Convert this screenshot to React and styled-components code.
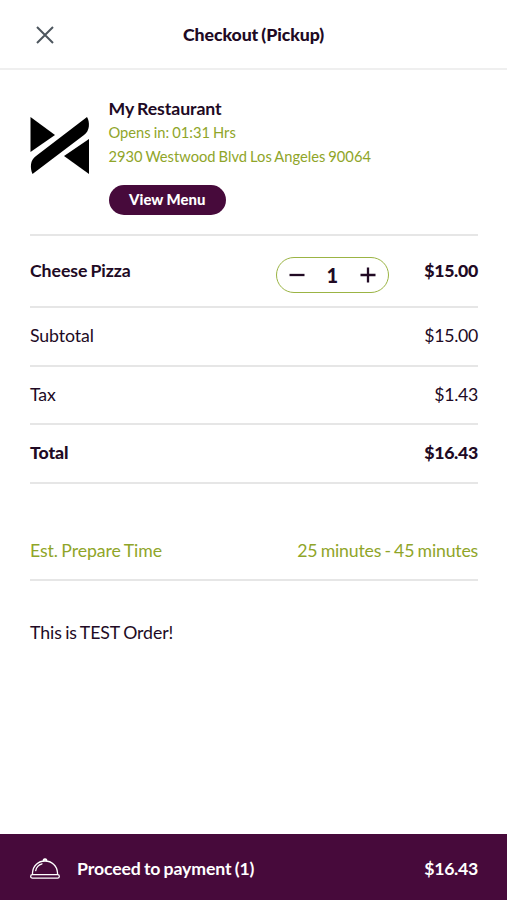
import React, { useState } from "react";
import styled, { createGlobalStyle } from "styled-components";

const GlobalStyle = createGlobalStyle`
  * {
    box-sizing: border-box;
  }

  body {
    margin: 0;
    background-color: #ffffff;
  }
`;

// Styled Components
const Container = styled.div`
  height: 900px;
  display: flex;
  flex-direction: column;
  background-color: #ffffff;
  color: #210a24;
  font-family: "Lato", sans-serif;
  font-size: 17.7px;
  line-height: 22px;
  letter-spacing: -0.08px;
  word-spacing: -1px;
`;

const Header = styled.header`
  height: 70px;
  padding: 0 30px;
  display: grid;
  grid-template-columns: 30px 1fr 30px;
  align-items: center;
  border-bottom: 2px solid #efefef;
`;

const IconButton = styled.button`
  width: 30px;
  height: 30px;
  padding: 0;
  display: flex;
  align-items: center;
  justify-content: center;
  border: none;
  background: none;
  color: ${(props) => props.$color || "#210a24"};
  cursor: pointer;
`;

const CloseButton = styled(IconButton)`
  margin-top: 2px;
`;

const Title = styled.h1`
  margin: 0;
  padding-top: 2px;
  text-align: center;
  font-size: 17.7px;
  font-weight: 900;
`;

const Content = styled.main`
  flex: 1;
  padding: 0 29px 0 30px;
`;

const Restaurant = styled.section`
  height: 166px;
  padding-top: 28px;
  display: flex;
  align-items: flex-start;
  gap: 18.5px;
  border-bottom: 2px solid #e6e6e6;
`;

const Logo = styled.svg`
  width: 60px;
  height: 58px;
  margin-top: 19px;
  flex-shrink: 0;
`;

const Name = styled.h2`
  margin: 0;
  font-size: 17.7px;
  font-weight: 700;
  line-height: 22px;
`;

const Detail = styled.p`
  margin: 0;
  color: #8fa529;
  font-size: 14.7px;
  line-height: 24.3px;
  letter-spacing: 0;
  word-spacing: -0.7px;
`;

const MenuButton = styled.button`
  width: 117.5px;
  height: 30px;
  margin-top: 16.4px;
  padding: 0 0 2px;
  border: none;
  border-radius: 15px;
  background-color: #470a3b;
  color: #ffffff;
  font-family: inherit;
  font-size: 14.9px;
  font-weight: 900;
  cursor: pointer;
`;

const Row = styled.div`
  height: ${(props) => props.$height || "58.7px"};
  padding-top: ${(props) => props.$offset || "0"};
  display: flex;
  align-items: center;
  justify-content: space-between;
  border-bottom: 2px solid #e6e6e6;
  color: ${(props) => props.$color || "inherit"};
  font-weight: ${(props) => props.$weight || 400};
`;

const TotalRow = styled(Row)`
  padding-bottom: 1px;
  font-weight: 900;
`;

const Price = styled.span`
  letter-spacing: -0.28px;
`;

const ItemPrice = styled(Price)`
  font-weight: 900;
`;

const PrepareTime = styled.span`
  letter-spacing: -0.2px;
`;

const ItemName = styled.span`
  flex: 1;
`;

const Stepper = styled.div`
  width: 113px;
  height: 36px;
  margin: 7px 35.5px 0 0;
  padding: 0 5px;
  display: flex;
  align-items: center;
  justify-content: space-between;
  border: 1.5px solid #9bb444;
  border-radius: 18px;
`;

const Quantity = styled.span`
  font-size: 20px;
  font-weight: 900;
`;

const Note = styled.p`
  margin: 41px 0 0;
`;

const Footer = styled.footer`
  height: 66px;
  padding: 3px 29px 0 30px;
  display: flex;
  align-items: center;
  background-color: #470a3b;
  color: #ffffff;
  font-weight: 700;
`;

const FooterLabel = styled.span`
  flex: 1;
  margin-left: 17px;
  letter-spacing: -0.12px;
`;

const UNIT_PRICE = 15;
const TAX_RATE = 0.095;

const money = (value) => `$${value.toFixed(2)}`;

const CloseIcon = () => (
  <svg width="18" height="18" viewBox="0 0 18 18" fill="none" stroke="currentColor" strokeWidth="2">
    <path d="M1 1L17 17M17 1L1 17" />
  </svg>
);

const MinusIcon = () => (
  <svg width="16" height="16" viewBox="0 0 16 16" stroke="currentColor" strokeWidth="2.3">
    <path d="M0.5 8H15.5" />
  </svg>
);

const PlusIcon = () => (
  <svg width="16" height="16" viewBox="0 0 16 16" stroke="currentColor" strokeWidth="2.3">
    <path d="M0.5 8H15.5M8 0.5V15.5" />
  </svg>
);

const ClocheIcon = () => (
  <svg width="30" height="22" viewBox="0 0 30 22" fill="none" stroke="currentColor" strokeWidth="1.3" strokeLinecap="round" strokeLinejoin="round">
    <rect x="0.7" y="16.6" width="28.6" height="3.5" rx="1.7" />
    <path d="M2.5 16.4V14.7C3 7.6 8.3 3 15 3S27 7.6 27.5 14.7V16.4" />
    <path d="M5.7 12.6C6.4 9 8.8 6.8 12 5.8" />
    <path d="M13.4 2.7C13 0.2 17 0.2 16.6 2.7" fill="currentColor" />
  </svg>
);

const App = () => {
  const [quantity, setQuantity] = useState(1);

  const subtotal = UNIT_PRICE * quantity;
  const tax = Math.round(subtotal * TAX_RATE * 100 + 0.0001) / 100;
  const total = subtotal + tax;

  return (
    <>
      <GlobalStyle />
      <Container>
        <Header>
          <CloseButton $color="#4d565e" aria-label="Close">
            <CloseIcon />
          </CloseButton>
          <Title>Checkout (Pickup)</Title>
        </Header>

        <Content>
          <Restaurant>
            <Logo viewBox="0 0 60 58">
              <path d="M0.5 0L25 18L0.5 35Z" />
              <path d="M57 0C60 5 60 14 54 18L2.5 57C0 51 0 43 6 39Z" />
              <path d="M59 22V57L34 39Z" />
            </Logo>
            <div>
              <Name>My Restaurant</Name>
              <Detail>Opens in: 01:31 Hrs</Detail>
              <Detail>2930 Westwood Blvd Los Angeles 90064</Detail>
              <MenuButton>View Menu</MenuButton>
            </div>
          </Restaurant>

          <Row $height="72px" $weight={700}>
            <ItemName>Cheese Pizza</ItemName>
            <Stepper>
              <IconButton
                aria-label="Remove one"
                onClick={() => setQuantity(Math.max(1, quantity - 1))}
              >
                <MinusIcon />
              </IconButton>
              <Quantity>{quantity}</Quantity>
              <IconButton aria-label="Add one" onClick={() => setQuantity(quantity + 1)}>
                <PlusIcon />
              </IconButton>
            </Stepper>
            <ItemPrice>{money(subtotal)}</ItemPrice>
          </Row>
          <Row>
            <span>Subtotal</span>
            <Price>{money(subtotal)}</Price>
          </Row>
          <Row>
            <span>Tax</span>
            <Price>{money(tax)}</Price>
          </Row>
          <TotalRow $weight={900}>
            <span>Total</span>
            <Price>{money(total)}</Price>
          </TotalRow>
          <Row $height="97px" $offset="38px" $color="#8fa529">
            <span>Est. Prepare Time</span>
            <PrepareTime>25 minutes - 45 minutes</PrepareTime>
          </Row>
          <Note>This is TEST Order!</Note>
        </Content>

        <Footer>
          <ClocheIcon />
          <FooterLabel>Proceed to payment ({quantity})</FooterLabel>
          <Price>{money(total)}</Price>
        </Footer>
      </Container>
    </>
  );
};

export default App;
